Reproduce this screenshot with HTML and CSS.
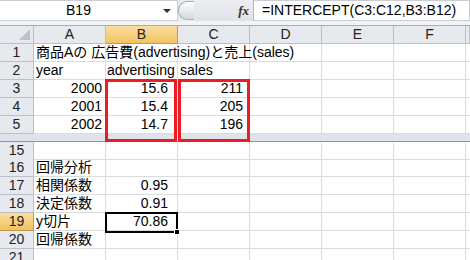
FILE: index.html
```html
<!DOCTYPE html>
<html lang="ja">
<head>
  <meta charset="UTF-8" />
  <title>Excel INTERCEPT</title>
  <link rel="stylesheet" href="styles.css">
</head>
<body>
  <div class="formula-bar">
    <div class="name-box">
      <span class="name">B19</span>
      <span class="dropdown"></span>
    </div>
    <span class="grip"></span>
    <div class="fx-area"><span class="fx">fx</span></div>
    <div class="formula">=INTERCEPT(C3:C12,B3:B12)</div>
  </div>

  <div class="sheet">
    <div class="row head-row">
      <div class="corner"><span class="corner-mark"></span></div>
      <div class="col-head">A</div>
      <div class="col-head active">B</div>
      <div class="col-head">C</div>
      <div class="col-head">D</div>
      <div class="col-head">E</div>
      <div class="col-head">F</div>
      <div class="col-head"></div>
    </div>

    <div class="row">
      <div class="row-head">1</div>
      <div class="cell wide">商品Aの 広告費(advertising)と売上(sales)</div>
      <div class="cell"></div><div class="cell"></div><div class="cell"></div>
      <div class="cell"></div><div class="cell"></div><div class="cell"></div>
    </div>
    <div class="row">
      <div class="row-head">2</div>
      <div class="cell text">year</div>
      <div class="cell text tight">advertising</div>
      <div class="cell text">sales</div>
      <div class="cell"></div><div class="cell"></div><div class="cell"></div><div class="cell"></div>
    </div>
    <div class="row">
      <div class="row-head">3</div>
      <div class="cell num-a">2000</div>
      <div class="cell num-b">15.6</div>
      <div class="cell num-c">211</div>
      <div class="cell"></div><div class="cell"></div><div class="cell"></div><div class="cell"></div>
    </div>
    <div class="row">
      <div class="row-head">4</div>
      <div class="cell num-a">2001</div>
      <div class="cell num-b">15.4</div>
      <div class="cell num-c">205</div>
      <div class="cell"></div><div class="cell"></div><div class="cell"></div><div class="cell"></div>
    </div>
    <div class="row">
      <div class="row-head">5</div>
      <div class="cell num-a">2002</div>
      <div class="cell num-b">14.7</div>
      <div class="cell num-c">196</div>
      <div class="cell"></div><div class="cell"></div><div class="cell"></div><div class="cell"></div>
    </div>

    <div class="split-bar"></div>

    <div class="row short">
      <div class="row-head">15</div>
      <div class="cell"></div><div class="cell"></div><div class="cell"></div>
      <div class="cell"></div><div class="cell"></div><div class="cell"></div><div class="cell"></div>
    </div>
    <div class="row">
      <div class="row-head">16</div>
      <div class="cell text">回帰分析</div>
      <div class="cell"></div><div class="cell"></div><div class="cell"></div>
      <div class="cell"></div><div class="cell"></div><div class="cell"></div>
    </div>
    <div class="row">
      <div class="row-head">17</div>
      <div class="cell text">相関係数</div>
      <div class="cell num-b">0.95</div>
      <div class="cell"></div><div class="cell"></div>
      <div class="cell"></div><div class="cell"></div><div class="cell"></div>
    </div>
    <div class="row">
      <div class="row-head">18</div>
      <div class="cell text">決定係数</div>
      <div class="cell num-b">0.91</div>
      <div class="cell"></div><div class="cell"></div>
      <div class="cell"></div><div class="cell"></div><div class="cell"></div>
    </div>
    <div class="row">
      <div class="row-head active">19</div>
      <div class="cell text">y切片</div>
      <div class="cell num-b">70.86</div>
      <div class="cell"></div><div class="cell"></div>
      <div class="cell"></div><div class="cell"></div><div class="cell"></div>
    </div>
    <div class="row">
      <div class="row-head">20</div>
      <div class="cell text">回帰係数</div>
      <div class="cell"></div><div class="cell"></div><div class="cell"></div>
      <div class="cell"></div><div class="cell"></div><div class="cell"></div>
    </div>
    <div class="row">
      <div class="row-head">21</div>
      <div class="cell"></div><div class="cell"></div><div class="cell"></div>
      <div class="cell"></div><div class="cell"></div><div class="cell"></div><div class="cell"></div>
    </div>

    <!-- overlays: red marks and the active cell -->
    <div class="mark mark-b"></div>
    <div class="mark mark-c"></div>
    <div class="selection"><span class="fill-handle"></span></div>
  </div>
</body>
</html>
```

FILE: styles.css
```css
:root {
  --grid-line: #dadcdd;
  --head-bg: #e6e9ed;
  --head-line: #bcc0c6;
  --active-top: #f9dea1;
  --active-bottom: #f2c35f;
  --mark-red: #ed1c24;
}

* {
  margin: 0;
  padding: 0;
  box-sizing: border-box;
}

body {
  width: 470px;
  height: 260px;
  overflow: hidden;
  background: #fff;
  font-family: "Liberation Sans", "Noto Sans CJK JP", sans-serif;
  font-size: 14px;
  color: #000;
}

/* formula bar */
.formula-bar {
  height: 26px;
  display: flex;
  align-items: flex-start;
  background: #e6e9ed;
  border-bottom: 1px solid #a7adb5;
  box-shadow: inset 0 -4px 0 #f1f3f5;
}

.name-box {
  width: 178px;
  height: 21px;
  background: #fff;
  border: 1px solid #c9ced4;
  border-left: none;
  display: flex;
  align-items: center;
}

.name {
  flex: 1;
  text-align: center;
  padding-right: 6px;
  line-height: 19px;
}

.dropdown {
  width: 0;
  height: 0;
  border-left: 4px solid transparent;
  border-right: 4px solid transparent;
  border-top: 4px solid #333;
  margin-right: 6px;
}

.grip {
  width: 16px;
  height: 19px;
  margin-top: 1px;
  border: 1px solid #a9afb7;
  border-right: none;
  border-radius: 10px 0 0 10px;
  background: linear-gradient(#fdfdfd, #d5d9de);
}

.fx-area {
  width: 60px;
  height: 21px;
  display: flex;
  justify-content: flex-end;
  align-items: center;
  padding-right: 4px;
  background: linear-gradient(#eceef1, #dfe2e6);
  border-right: 1px solid #b4b9c0;
}

.fx {
  font-family: "Liberation Serif", serif;
  font-style: italic;
  font-weight: bold;
  font-size: 13px;
  line-height: 15px;
  color: #333;
}

.formula {
  flex: 1;
  height: 21px;
  background: #fff;
  border: 1px solid #c9ced4;
  border-left: none;
  padding-left: 8px;
  line-height: 19px;
  white-space: nowrap;
}

/* sheet grid */
.sheet {
  position: relative;
}

.row {
  display: grid;
  grid-template-columns: 34px repeat(6, 72px) 1fr;
  height: 18px;
}

.row.short {
  height: 17px;
}

.row > div {
  border-right: 1px solid var(--grid-line);
  border-bottom: 1px solid var(--grid-line);
  white-space: nowrap;
  line-height: 17px;
}

.head-row > div,
.row > .row-head {
  background: var(--head-bg);
  border-right-color: var(--head-line);
  border-bottom-color: var(--head-line);
  text-align: center;
  color: #222;
}

.head-row > .active,
.row > .row-head.active {
  background: linear-gradient(var(--active-top), var(--active-bottom));
  border-right-color: #c29b4a;
  border-bottom-color: #c29b4a;
}

.corner {
  position: relative;
}

.corner-mark {
  position: absolute;
  right: 3px;
  bottom: 3px;
  width: 0;
  height: 0;
  border-left: 11px solid transparent;
  border-bottom: 11px solid #bcc2ca;
}

.cell {
  padding: 0 3px;
}

.cell.wide {
  overflow: visible;
  position: relative;
  z-index: 1;
  padding-left: 2px;
}

.cell.text {
  padding-left: 2px;
}

.cell.tight {
  padding-left: 1px;
}

.num-a {
  text-align: right;
  padding-right: 3px;
}

.num-b {
  text-align: right;
  padding-right: 9px;
}

.num-c {
  text-align: right;
  padding-right: 6px;
}

.split-bar {
  height: 8px;
  background: #dfe3ec;
  border-bottom: 1px solid #8f96a4;
}

/* overlays */
.mark {
  position: absolute;
  top: 53px;
  width: 72px;
  height: 63px;
  border: 3px solid var(--mark-red);
}

.mark-b {
  left: 105px;
}

.mark-c {
  left: 178px;
}

.selection {
  position: absolute;
  left: 105px;
  top: 186px;
  width: 73px;
  height: 21px;
  border: 2px solid #000;
}

.fill-handle {
  position: absolute;
  right: -4px;
  bottom: -4px;
  width: 6px;
  height: 6px;
  background: #000;
  border: 1px solid #fff;
}
```
